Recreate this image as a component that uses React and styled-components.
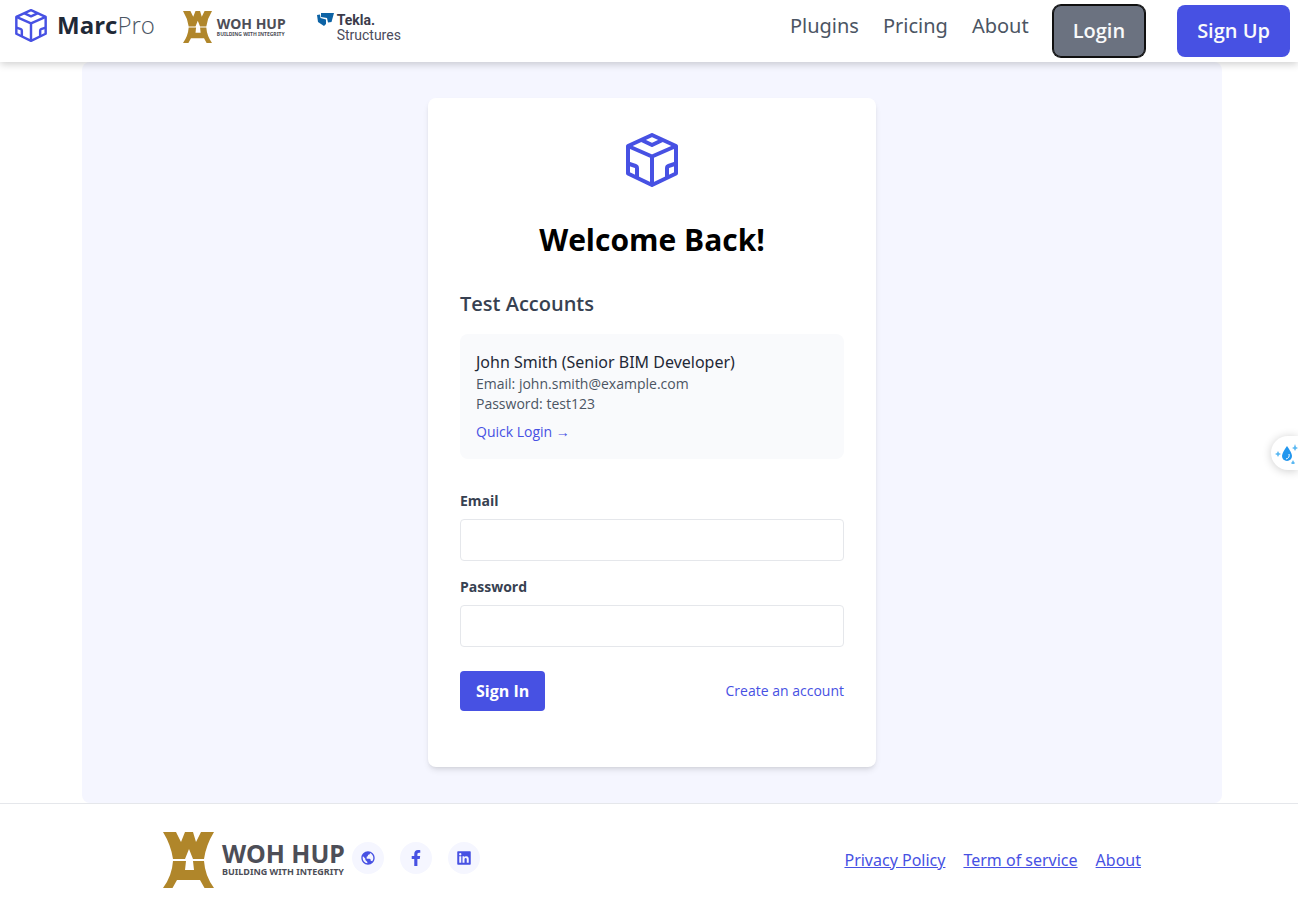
import React from 'react';
import styled, { createGlobalStyle } from 'styled-components';
import { BiWorld, BiLogoLinkedinSquare } from 'react-icons/bi';
import { FaFacebookF } from 'react-icons/fa';

const brand = '#4751e3';
const gold = '#b0862a';
const wideFont = '"Noto Sans", "Open Sans", sans-serif';

const GlobalStyle = createGlobalStyle`
  *, *::before, *::after { box-sizing: border-box; }
  body {
    margin: 0;
    background: #fff;
    color: #1f2937;
    font-family: "Open Sans", "Liberation Sans", sans-serif;
    font-size: 16px;
    line-height: 24px;
    overflow-x: hidden;
  }
  h1, h2, p { margin: 0; }
  button, input { font: inherit; }
`;

const Header = styled.header`
  position: relative;
  z-index: 1;
  display: flex;
  justify-content: space-between;
  align-items: flex-start;
  padding: 5px 8px 5px 15px;
  background: #fff;
  box-shadow: 0 2px 8px rgba(0, 0, 0, 0.2);
`;

const Brands = styled.div`
  display: flex;
  align-items: center;
  height: 44px;
  gap: 28px;
`;

const HomeLink = styled.a`
  display: flex;
  align-items: center;
  gap: 10px;
  color: #1f2937;
  font-size: 24px;
  font-weight: 700;
  line-height: 32px;
  padding-bottom: 4px;
  text-decoration: none;
`;

const Thin = styled.span`
  font-weight: 300;
  color: #4b5563;
`;

const Nav = styled.nav`
  display: flex;
  align-items: flex-start;
  gap: 24px;
`;

const NavLink = styled.a`
  color: #4b5563;
  font-family: ${wideFont};
  font-size: 20px;
  line-height: 28px;
  padding: 7px 0;
  text-decoration: none;
`;

const NavButtons = styled.div`
  display: flex;
  gap: 32px;
`;

const NavButton = styled.button`
  padding: 12px 20px;
  border: 0;
  border-radius: 8px;
  background: ${(p) => (p.$muted ? '#6b7280' : brand)};
  color: #f9fafb;
  font-size: 20px;
  font-weight: 600;
  line-height: 28px;
  box-shadow: ${(p) => (p.$muted ? '0 0 0 1px #101010, inset 0 0 0 1px #101010' : 'none')};
`;

const WohLogo = styled.div`
  display: flex;
  align-items: center;
  gap: ${(p) => (p.$large ? 8 : 5)}px;
  color: #4d4e57;
  font-family: "Noto Sans", sans-serif;
  font-weight: 700;
  white-space: nowrap;
`;

const WohName = styled.div`
  font-size: ${(p) => (p.$large ? 25 : 14)}px;
  line-height: ${(p) => (p.$large ? 26 : 14)}px;
`;

const WohTagline = styled.div`
  font-size: ${(p) => (p.$large ? 9 : 5)}px;
  line-height: ${(p) => (p.$large ? 12 : 7)}px;
  padding-bottom: ${(p) => (p.$large ? 2 : 0)}px;
`;

const TeklaLogo = styled.div`
  display: flex;
  align-items: flex-start;
  gap: 3px;
  padding: 2px 0 0 3px;
  color: #4b4b5c;
  font-family: Roboto, sans-serif;
  font-size: 14px;
  line-height: 15px;
`;

const TeklaName = styled.div`
  font-weight: 700;
  color: #3b3b4b;
`;

const Centered = styled.div`
  padding-left: 6px;
`;

const Panel = styled.main`
  max-width: 1140px;
  margin: 0 auto;
  padding: 36px 16px;
  border-radius: 8px;
  background: #f5f6ff;
`;

const Card = styled.section`
  max-width: 448px;
  margin: 0 auto;
  padding: 32px 32px 56px;
  border-radius: 8px;
  background: #fff;
  box-shadow: 0 4px 6px -1px rgba(0, 0, 0, 0.1), 0 2px 4px -2px rgba(0, 0, 0, 0.1);
`;

const CardMark = styled.div`
  display: flex;
  justify-content: center;
  height: 60px;
  align-items: center;
`;

const Title = styled.h1`
  margin-top: 32px;
  color: #000;
  font-size: 30px;
  font-weight: 700;
  line-height: 36px;
  text-align: center;
`;

const Subtitle = styled.h2`
  margin: 32px 0 16px;
  color: #374151;
  font-size: 20px;
  font-weight: 600;
  line-height: 28px;
`;

const Account = styled.div`
  padding: 16px 16px 17px;
  border-radius: 8px;
  background: #f9fafc;
`;

const AccountName = styled.p`
  color: #1f2937;
  font-family: ${wideFont};
`;

const AccountLine = styled.p`
  color: #4b5563;
  font-size: 14px;
  line-height: 20px;
`;

const QuickLogin = styled.button`
  display: block;
  margin-top: 8px;
  padding: 0;
  border: 0;
  background: none;
  color: ${brand};
  font-size: 14px;
  line-height: 20px;
`;

const Form = styled.form`
  margin-top: 32px;
`;

const Field = styled.div`
  margin-bottom: ${(p) => (p.$last ? 24 : 16)}px;
`;

const Label = styled.label`
  display: block;
  margin-bottom: 8px;
  color: #374151;
  font-size: 14px;
  font-weight: 700;
  line-height: 20px;
`;

const Input = styled.input`
  display: block;
  width: 100%;
  height: 42px;
  padding: 8px 12px;
  border: 1px solid #e5e7eb;
  border-radius: 4px;
  background: #fff;
`;

const Actions = styled.div`
  display: flex;
  align-items: center;
  justify-content: space-between;
`;

const Submit = styled.button`
  padding: 8px 16px;
  border: 0;
  border-radius: 4px;
  background: ${brand};
  color: #fff;
  font-weight: 700;
  line-height: 24px;
`;

const CreateLink = styled.a`
  color: ${brand};
  font-size: 14px;
  line-height: 20px;
  text-decoration: none;
`;

const Footer = styled.footer`
  border-top: 1px solid #e5e7eb;
`;

const FooterRow = styled.div`
  display: flex;
  align-items: center;
  justify-content: space-between;
  max-width: 1026px;
  margin: 0 auto;
  padding: 28px 24px 12px;
`;

const FooterBrand = styled.div`
  display: flex;
  align-items: center;
  gap: 7px;
`;

const Socials = styled.div`
  display: flex;
  gap: 16px;
  padding-bottom: 4px;
`;

const Social = styled.a`
  display: grid;
  place-items: center;
  width: 32px;
  height: 32px;
  border-radius: 50%;
  background: #f5f6ff;
  color: ${brand};
`;

const FooterLinks = styled.nav`
  display: flex;
  gap: 18px;
`;

const FooterLink = styled.a`
  color: ${brand};
  font-family: ${wideFont};
  text-decoration: underline;
`;

const Assistant = styled.button`
  position: fixed;
  top: 436px;
  right: 0;
  display: flex;
  align-items: center;
  width: 27px;
  height: 34px;
  padding: 0 0 0 4px;
  border: 0;
  border-radius: 17px 0 0 17px;
  background: #fff;
  box-shadow: 0 1px 10px rgba(0, 0, 0, 0.2);
  overflow: visible;
`;

const CubeIcon = ({ width, height }) => (
  <svg width={width} height={height} viewBox="0 0 52 54" fill="none" stroke={brand} strokeWidth="4" strokeLinejoin="round" aria-hidden="true">
    <path d="M26 2 50 13V40.500L26 52 2 40.500V13Z" />
    <path d="M2 13 26 23.500 50 13M26 23.500V52M15.500 7 26 12 36.500 7M2 30.500 9.500 33Q11 33.500 11 35.500V44.500M50 30.500 42.500 33Q41 33.500 41 35.500V44.500" />
  </svg>
);

const WohMark = ({ width, height }) => (
  <svg width={width} height={height} viewBox="0 0 51 56" fill={gold} aria-hidden="true">
    <path d="M0 0H13L18 10 22 0H30L33 10 38 0H51Q43 13 41 27H30L26 17 22 27H10Q8 13 0 0Z" />
    <path d="M10 29H23L22 38H31L30 29H41Q42 44 51 56H41.500L37 48H14L9.500 56H0Q9 44 10 29Z" />
  </svg>
);

const WohHup = ({ large }) => (
  <WohLogo $large={large}>
    <WohMark width={large ? 51 : 29} height={large ? 56 : 32} />
    <div>
      <WohName $large={large}>WOH HUP</WohName>
      <WohTagline $large={large}>BUILDING WITH INTEGRITY</WohTagline>
    </div>
  </WohLogo>
);

export default function App() {
  return (
    <>
      <GlobalStyle />
      <Header>
        <Brands>
          <HomeLink href="#">
            <CubeIcon width={32} height={33} />
            <span>Marc<Thin>Pro</Thin></span>
          </HomeLink>
          <WohHup />
          <TeklaLogo>
            <svg width="17" height="14" viewBox="0 0 17 14" aria-hidden="true">
              <path d="M4 0H17L14.500 9 11 9.500 10 5 4 4Z" fill="#0d63a5" />
              <path d="M0 2 3 1.500 3.500 5 9 6.500V11L7 13 1 9Z" fill="#0d63a5" />
            </svg>
            <div>
              <TeklaName>Tekla.</TeklaName>
              <div>Structures</div>
            </div>
          </TeklaLogo>
        </Brands>
        <Nav>
          <NavLink href="#">Plugins</NavLink>
          <NavLink href="#">Pricing</NavLink>
          <NavLink href="#">About</NavLink>
          <NavButtons>
            <NavButton type="button" $muted>Login</NavButton>
            <NavButton type="button">Sign Up</NavButton>
          </NavButtons>
        </Nav>
      </Header>
      <Centered>
        <Panel>
          <Card>
            <CardMark><CubeIcon width={52} height={54} /></CardMark>
            <Title>Welcome Back!</Title>
            <Subtitle>Test Accounts</Subtitle>
            <Account>
              <AccountName>John Smith (Senior BIM Developer)</AccountName>
              <AccountLine>Email: john.smith@example.com</AccountLine>
              <AccountLine>Password: test123</AccountLine>
              <QuickLogin type="button">Quick Login →</QuickLogin>
            </Account>
            <Form>
              <Field>
                <Label htmlFor="email">Email</Label>
                <Input id="email" type="email" />
              </Field>
              <Field $last>
                <Label htmlFor="password">Password</Label>
                <Input id="password" type="password" />
              </Field>
              <Actions>
                <Submit type="submit">Sign In</Submit>
                <CreateLink href="#">Create an account</CreateLink>
              </Actions>
            </Form>
          </Card>
        </Panel>
      </Centered>
      <Footer>
        <Centered>
          <FooterRow>
            <FooterBrand>
              <WohHup large />
              <Socials>
                <Social href="#" aria-label="Website"><BiWorld size={16} /></Social>
                <Social href="#" aria-label="Facebook"><FaFacebookF size={16} /></Social>
                <Social href="#" aria-label="LinkedIn"><BiLogoLinkedinSquare size={18} /></Social>
              </Socials>
            </FooterBrand>
            <FooterLinks>
              <FooterLink href="#">Privacy Policy</FooterLink>
              <FooterLink href="#">Term of service</FooterLink>
              <FooterLink href="#">About</FooterLink>
            </FooterLinks>
          </FooterRow>
        </Centered>
      </Footer>
      <Assistant type="button" aria-label="Assistant">
        <svg width="23" height="22" viewBox="0 0 23 22" fill="#2196ee" aria-hidden="true">
          <path d="M12 4Q17 11 17 14A5 5 0 0 1 7 14Q7 11 12 4Z" />
          <path d="M3 9 4 11 6 12 4 13 3 15 2 13 0 12 2 11ZM20 2 21 5 23 6 21 7 20 9 19 7 17 6 19 5ZM18 18 19 20 20 21 19 22H17L16 21 17 20Z" fill="#5bb8f2" />
          <path d="M14 12Q15 16 11 17" fill="none" stroke="#fff" />
        </svg>
      </Assistant>
    </>
  );
}
